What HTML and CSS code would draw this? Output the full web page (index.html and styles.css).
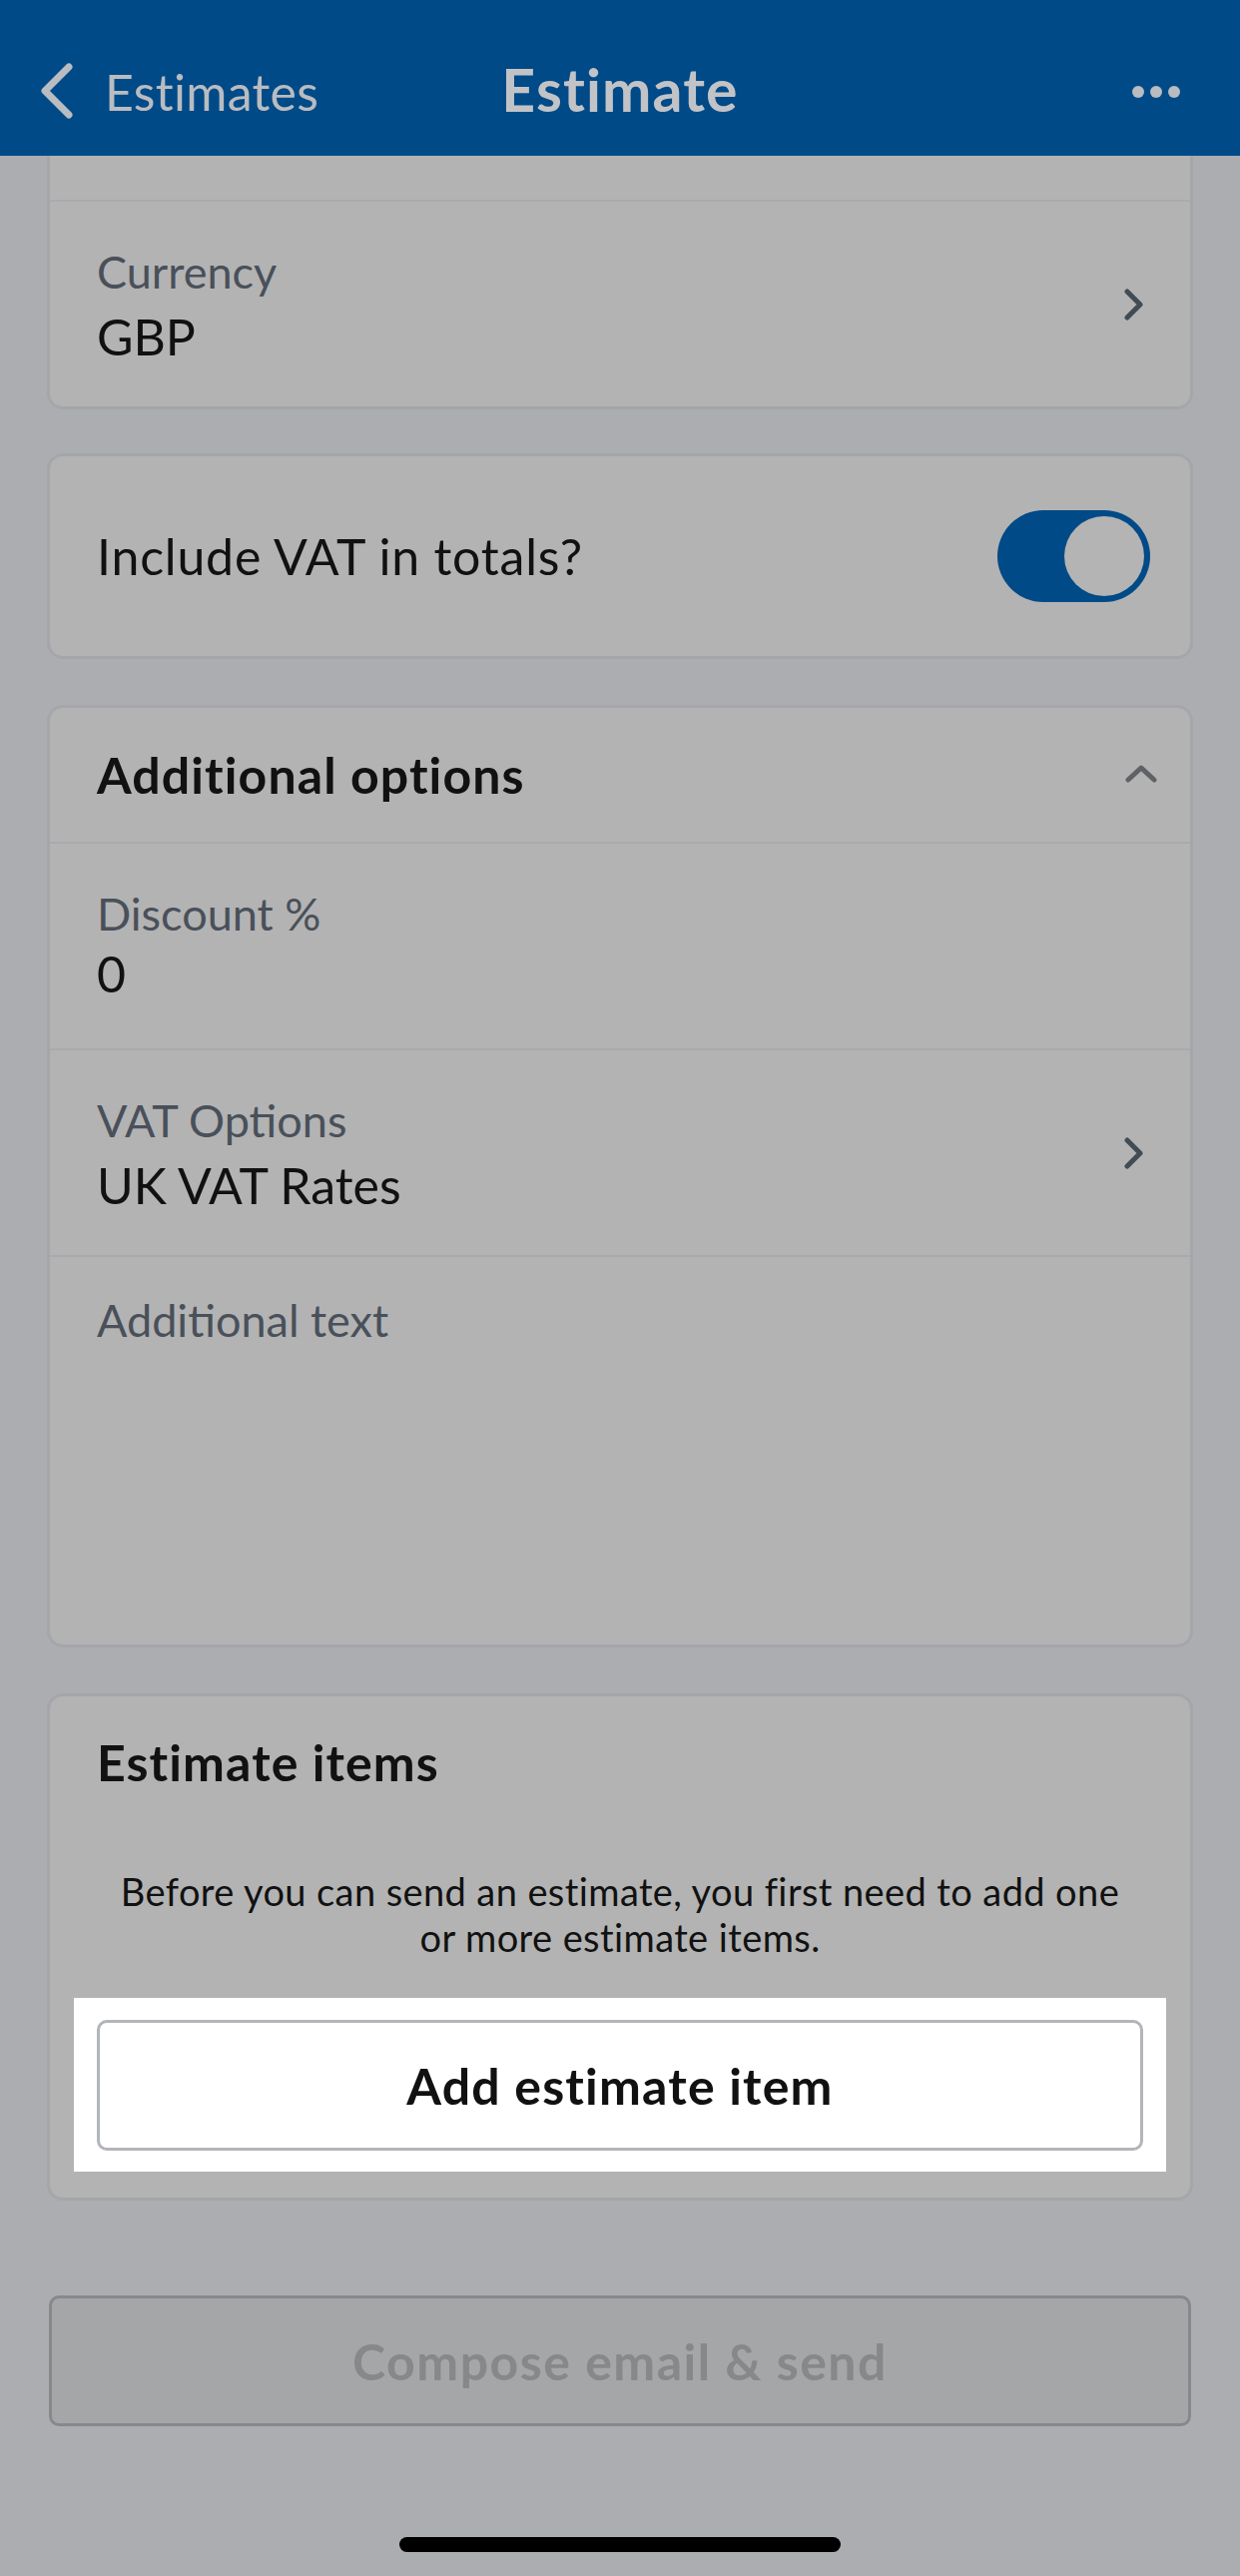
FILE: index.html
```html
<!DOCTYPE html>
<html lang="en">
<head>
    <meta charset="UTF-8">
    <meta name="viewport" content="width=device-width, initial-scale=1.0">
    <title>Estimate</title>
    <link rel="stylesheet" href="styles.css">
</head>
<body>
    <header class="navbar">
        <a class="nav-back" href="#">
            <svg width="34" height="56" viewBox="0 0 34 56"><path d="M29 4 L5 28 L29 52" fill="none" stroke="currentColor" stroke-width="7" stroke-linecap="round" stroke-linejoin="round"/></svg>
            <span>Estimates</span>
        </a>
        <h1 class="nav-title">Estimate</h1>
        <button class="nav-more" aria-label="More">
            <svg width="48" height="12" viewBox="0 0 48 12"><circle cx="6" cy="6" r="6"/><circle cx="24" cy="6" r="6"/><circle cx="42" cy="6" r="6"/></svg>
        </button>
    </header>

    <main class="content">
        <!-- carte partiellement défilée sous la barre -->
        <section class="card card-scrolled">
            <div class="field">
                <div class="field-text">
                    <span class="field-value field-value-hidden">Today</span>
                </div>
            </div>
            <div class="field">
                <div class="field-text">
                    <span class="field-label">Currency</span>
                    <span class="field-value">GBP</span>
                </div>
                <svg class="chevron-right" width="20" height="32" viewBox="0 0 20 32"><path d="M3 3 L16 16 L3 29" fill="none" stroke="currentColor" stroke-width="5" stroke-linecap="round" stroke-linejoin="round"/></svg>
            </div>
        </section>

        <section class="card card-toggle">
            <span class="toggle-label">Include VAT in totals?</span>
            <div class="switch"><span class="switch-knob"></span></div>
        </section>

        <section class="card">
            <div class="card-head">
                <h2>Additional options</h2>
                <svg class="chevron-up" width="32" height="19" viewBox="0 0 32 19"><path d="M3 16 L16 4 L29 16" fill="none" stroke="currentColor" stroke-width="5" stroke-linecap="round" stroke-linejoin="round"/></svg>
            </div>
            <div class="field">
                <div class="field-text">
                    <span class="field-label">Discount %</span>
                    <span class="field-value field-value-tight">0</span>
                </div>
            </div>
            <div class="field">
                <div class="field-text">
                    <span class="field-label">VAT Options</span>
                    <span class="field-value">UK VAT Rates</span>
                </div>
                <svg class="chevron-right" width="20" height="32" viewBox="0 0 20 32"><path d="M3 3 L16 16 L3 29" fill="none" stroke="currentColor" stroke-width="5" stroke-linecap="round" stroke-linejoin="round"/></svg>
            </div>
            <div class="field field-textarea">
                <span class="field-label">Additional text</span>
            </div>
        </section>

        <section class="card card-items">
            <h2>Estimate items</h2>
            <p class="items-empty">Before you can send an estimate, you first need to add one or more estimate items.</p>
            <div class="spotlight">
                <button class="add-button">Add estimate item</button>
            </div>
        </section>

        <button class="send-button" disabled>Compose email &amp; send</button>
    </main>

    <div class="home-indicator"></div>
</body>
</html>
```

FILE: styles.css
```css
* {
    box-sizing: border-box;
}

body {
    margin: 0;
    width: 1242px;
    height: 2580px;
    overflow: hidden;
    background-color: #acadb1;
    font-family: Lato, "Liberation Sans", sans-serif;
    color: #111;
}

/* Barre de navigation */
.navbar {
    position: relative;
    z-index: 2;
    height: 156px;
    padding: 22px 40px 0;
    background-color: #004a88;
    color: #b9bcc0;
    display: grid;
    grid-template-columns: 1fr auto 1fr;
    align-items: center;
}

.nav-back {
    display: flex;
    align-items: center;
    gap: 31px;
    color: inherit;
    text-decoration: none;
    font-size: 50px;
    letter-spacing: 0.3px;
}

.nav-back svg {
    margin-top: 4px;
}

.nav-back span {
    margin-top: 6px;
}

.nav-title {
    margin: 0;
    font-size: 59px;
    font-weight: 700;
    letter-spacing: 1.1px;
    color: #c1c3c7;
}

.nav-more {
    justify-self: end;
    margin: 6px 20px 0 0;
    background: none;
    border: none;
    padding: 0;
    color: #b9bcc0;
    display: flex;
}

.nav-more svg {
    fill: currentColor;
}

/* Contenu */
.content {
    height: 2385px;
    overflow: hidden;
}

.card {
    margin: 46px 47px 0;
    background-color: #b3b3b3;
    border: 3px solid #a5a6aa;
    border-radius: 16px;
}

.card-scrolled {
    margin-top: -166px;
    border-top-left-radius: 0;
    border-top-right-radius: 0;
}

.field {
    height: 207px;
    padding: 40px 46px 0 47px;
    display: flex;
    justify-content: space-between;
}

.field + .field,
.card-head + .field {
    border-top: 2px solid #a9aaae;
}

.field-text {
    display: flex;
    flex-direction: column;
}

.field-label {
    font-size: 45px;
    line-height: 60px;
    color: #49505a;
}

.field-value {
    margin-top: 3px;
    font-size: 50px;
    line-height: 64px;
    color: #111;
}

.field-value-tight {
    margin-top: -2px;
}

.field-value-hidden {
    margin-top: 63px;
}

.chevron-right {
    align-self: center;
    margin-top: -40px;
    color: #434b53;
}

.field-textarea {
    height: 390px;
    padding-top: 33px;
}

/* Interrupteur TVA */
.card-toggle {
    margin-top: 44px;
    height: 206px;
    padding: 0 40px 0 47px;
    display: flex;
    align-items: center;
    justify-content: space-between;
}

.toggle-label {
    font-size: 50px;
    line-height: 60px;
    letter-spacing: 0.8px;
}

.switch {
    width: 153px;
    height: 92px;
    border-radius: 46px;
    background-color: #004a87;
    padding: 6px;
    display: flex;
    justify-content: flex-end;
}

.switch-knob {
    width: 80px;
    height: 80px;
    border-radius: 50%;
    background-color: #b4b4b4;
}

/* Options supplémentaires */
.card-head {
    height: 134px;
    padding: 0 33px 0 47px;
    display: flex;
    align-items: center;
    justify-content: space-between;
}

.card h2 {
    margin: 0;
    font-size: 50px;
    line-height: 60px;
    font-weight: 700;
    letter-spacing: 1.1px;
}

.chevron-up {
    color: #5f6165;
    margin-top: -4px;
}

/* Éléments du devis */
.card-items {
    padding: 36px 0 26px;
}

.card-items h2 {
    padding-left: 47px;
}

.items-empty {
    margin: 76px 0 0;
    padding: 0 55px;
    text-align: center;
    font-size: 38px;
    line-height: 46px;
    letter-spacing: 0.4px;
    color: #111;
}

.spotlight {
    margin: 38px 24px 0;
    padding: 22px 23px 21px;
    background-color: #fff;
}

.add-button {
    display: block;
    width: 100%;
    height: 131px;
    background-color: #fff;
    border: 3px solid #b2b5ba;
    border-radius: 10px;
    font-family: inherit;
    font-size: 50px;
    font-weight: 700;
    letter-spacing: 1.2px;
    color: #111;
}

.send-button {
    display: block;
    width: 1144px;
    height: 131px;
    margin: 95px auto 0;
    background-color: #a5a6a8;
    border: 3px solid #86888c;
    border-radius: 10px;
    font-family: inherit;
    font-size: 50px;
    font-weight: 700;
    letter-spacing: 1.5px;
    color: #86888a;
}

.home-indicator {
    width: 442px;
    height: 15px;
    margin: 0 auto;
    border-radius: 8px;
    background-color: #000;
}
```
